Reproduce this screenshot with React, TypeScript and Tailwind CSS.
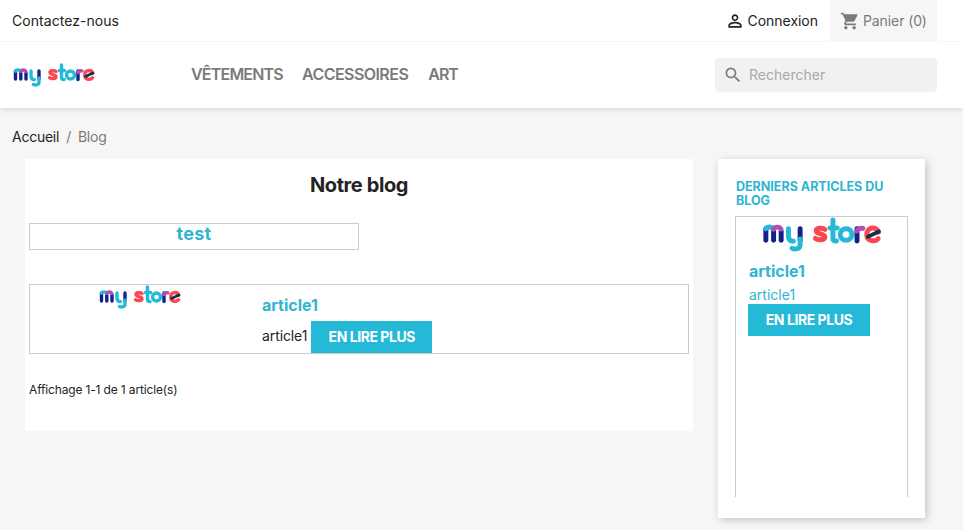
import React from "react";
import { MdPersonOutline, MdShoppingCart, MdSearch } from "react-icons/md";

function Logo({ className }: { className?: string }) {
  const blue = "#142187";
  const cyan = "#25b9d7";
  const red = "#f9484f";
  const pink = "#b04fb5";
  const dark = "#12324f";
  return (
    <svg viewBox="0 0 82 24" className={className} fill="none" strokeWidth="3.400" strokeLinecap="round" strokeLinejoin="round">
      <path d="M2.500 8v8" stroke={blue} />
      <path d="M7.800 10v6" stroke={blue} />
      <path d="M13 10v6" stroke={blue} />
      <path d="M2.500 8c1-1.500 4-1.500 5.200 0" stroke={cyan} />
      <path d="M7.800 8.300c1-1.800 4-1.800 5 0" stroke={pink} />
      <path d="M18 8v5c0 3 1.800 3.600 3.400 3.600" stroke={cyan} />
      <path d="M26 8v8" stroke={blue} />
      <path d="M26 15v4c0 3-3.500 3.500-5.500 2.500" stroke={cyan} />
      <path d="M43 8.500c-1.500-1.200-6-1.200-6 1 0 2.600 6 1.500 6 4.200 0 2.300-4.800 2.300-6.500 1" stroke={red} />
      <path d="M48.500 2v12.500c0 1.500 1 2 2.500 2" stroke={cyan} />
      <path d="M46.500 7.500h5" stroke={cyan} />
      <circle cx="57.500" cy="12" r="4" stroke={cyan} />
      <path d="M65 8v8.500" stroke={blue} />
      <path d="M65 9.500c.6-1.500 2.500-2 4-1.700" stroke={pink} />
      <path d="M79.500 14.800c-1.600 2.200-7.800 2.500-7.800-2.800 0-5.500 7-5.700 8-1.600" stroke={red} />
      <path d="M72.500 13.500l7.500-3.500" stroke={dark} strokeWidth="2.600" />
    </svg>
  );
}

function ReadMore({ className }: { className?: string }) {
  return (
    <div className={`flex h-8 items-center justify-center bg-[#24b9d7] text-sm font-bold tracking-[-0.45px] uppercase text-white ${className ?? ""}`}>
      En lire plus
    </div>
  );
}

export default function App() {
  return (
    <div className="flex h-[530px] w-[963px] flex-col overflow-hidden bg-[#f6f6f6] font-['Inter','Liberation_Sans',sans-serif] text-[14px] text-[#232323]">
      <header className="z-10 bg-white shadow-[0_2px_5px_0_rgba(0,0,0,0.11)]">
        <div className="flex h-[42px] items-center border-b border-[#f6f6f6] pl-3 pr-[26px]">
          <span className="tracking-[0.05px]">Contactez-nous</span>
          <div className="ml-auto flex items-center gap-[2px]">
            <MdPersonOutline className="text-[20px] text-[#232323]" />
            <span className="tracking-[-0.02px]">Connexion</span>
          </div>
          <div className="ml-3 flex h-[41px] w-[107px] items-center gap-[3px] self-start bg-[#f6f6f6] pl-[10px] text-[#7a7a7a]">
            <MdShoppingCart className="text-[20px]" />
            <span className="tracking-[-0.1px]">Panier (0)</span>
          </div>
        </div>
        <div className="flex h-[66px] items-center pl-[13px] pr-[26px]">
          <Logo className="h-6 w-[82px]" />
          <nav className="mb-[2px] ml-[96px] flex gap-[19px] text-base font-semibold uppercase text-[#7a7a7a]">
            <span className="tracking-[-0.8px]">Vêtements</span>
            <span className="tracking-[-0.55px]">Accessoires</span>
            <span className="ml-px tracking-[-1px]">Art</span>
          </nav>
          <div className="ml-auto flex h-[34px] w-[222px] items-center gap-[6px] rounded bg-[#f1f1f1] pl-2 text-[#a9a9a9]">
            <MdSearch className="text-[20px] text-[#7a7a7a]" />
            <span className="mb-px">Rechercher</span>
          </div>
        </div>
      </header>

      <div className="flex h-[51px] items-center gap-[7px] pl-3 pt-[6px] tracking-[-0.25px]">
        <span>Accueil</span>
        <span className="text-[#7a7a7a]">/</span>
        <span className="text-[#7a7a7a]">Blog</span>
      </div>

      <main className="flex items-start pl-[25px]">
        <section className="h-[272px] w-[668px] bg-white px-1">
          <h1 className="mt-3 text-center text-xl font-bold tracking-[-0.4px] text-[#232323]">Notre blog</h1>
          <div className="mt-6 h-[27px] w-[330px] border border-[#cccccc] text-center text-lg leading-[20px] font-bold tracking-[0.3px] text-[#2fb5d2]">
            test
          </div>
          <article className="mt-[34px] flex h-[70px] w-[660px] border border-[#cccccc]">
            <div className="w-[232px] pl-[69px]">
              <Logo className="h-6 w-[82px]" />
            </div>
            <div className="flex-1">
              <h2 className="mt-2 text-base font-bold text-[#2fb5d2]">article1</h2>
              <div className="mt-1 flex items-center gap-[4px]">
                <span className="mb-[3px] tracking-[-0.1px]">article1</span>
                <ReadMore className="w-[121px]" />
              </div>
            </div>
          </article>
          <p className="mt-7 text-xs tracking-[-0.15px]">Affichage 1-1 de 1 article(s)</p>
        </section>

        <aside className="ml-[25px] flex h-[359px] w-[207px] flex-col bg-white px-[17px] pb-[21px] pt-[21px] shadow-[2px_2px_8px_0_rgba(0,0,0,0.2)]">
          <h2 className="pl-px text-[12.5px] leading-[14px] font-bold uppercase text-[#2fb5d2]">Derniers articles du blog</h2>
          <div className="mt-2 flex-1 border border-b-0 border-[#cccccc] px-3">
            <Logo className="mx-auto h-[35px] w-[120px]" />
            <h3 className="mt-[7px] pl-px text-base font-bold text-[#2fb5d2]">article1</h3>
            <p className="mt-[2px] pl-px leading-[19px] text-[#2fb5d2]">article1</p>
            <ReadMore className="w-[122px]" />
          </div>
        </aside>
      </main>
    </div>
  );
}
